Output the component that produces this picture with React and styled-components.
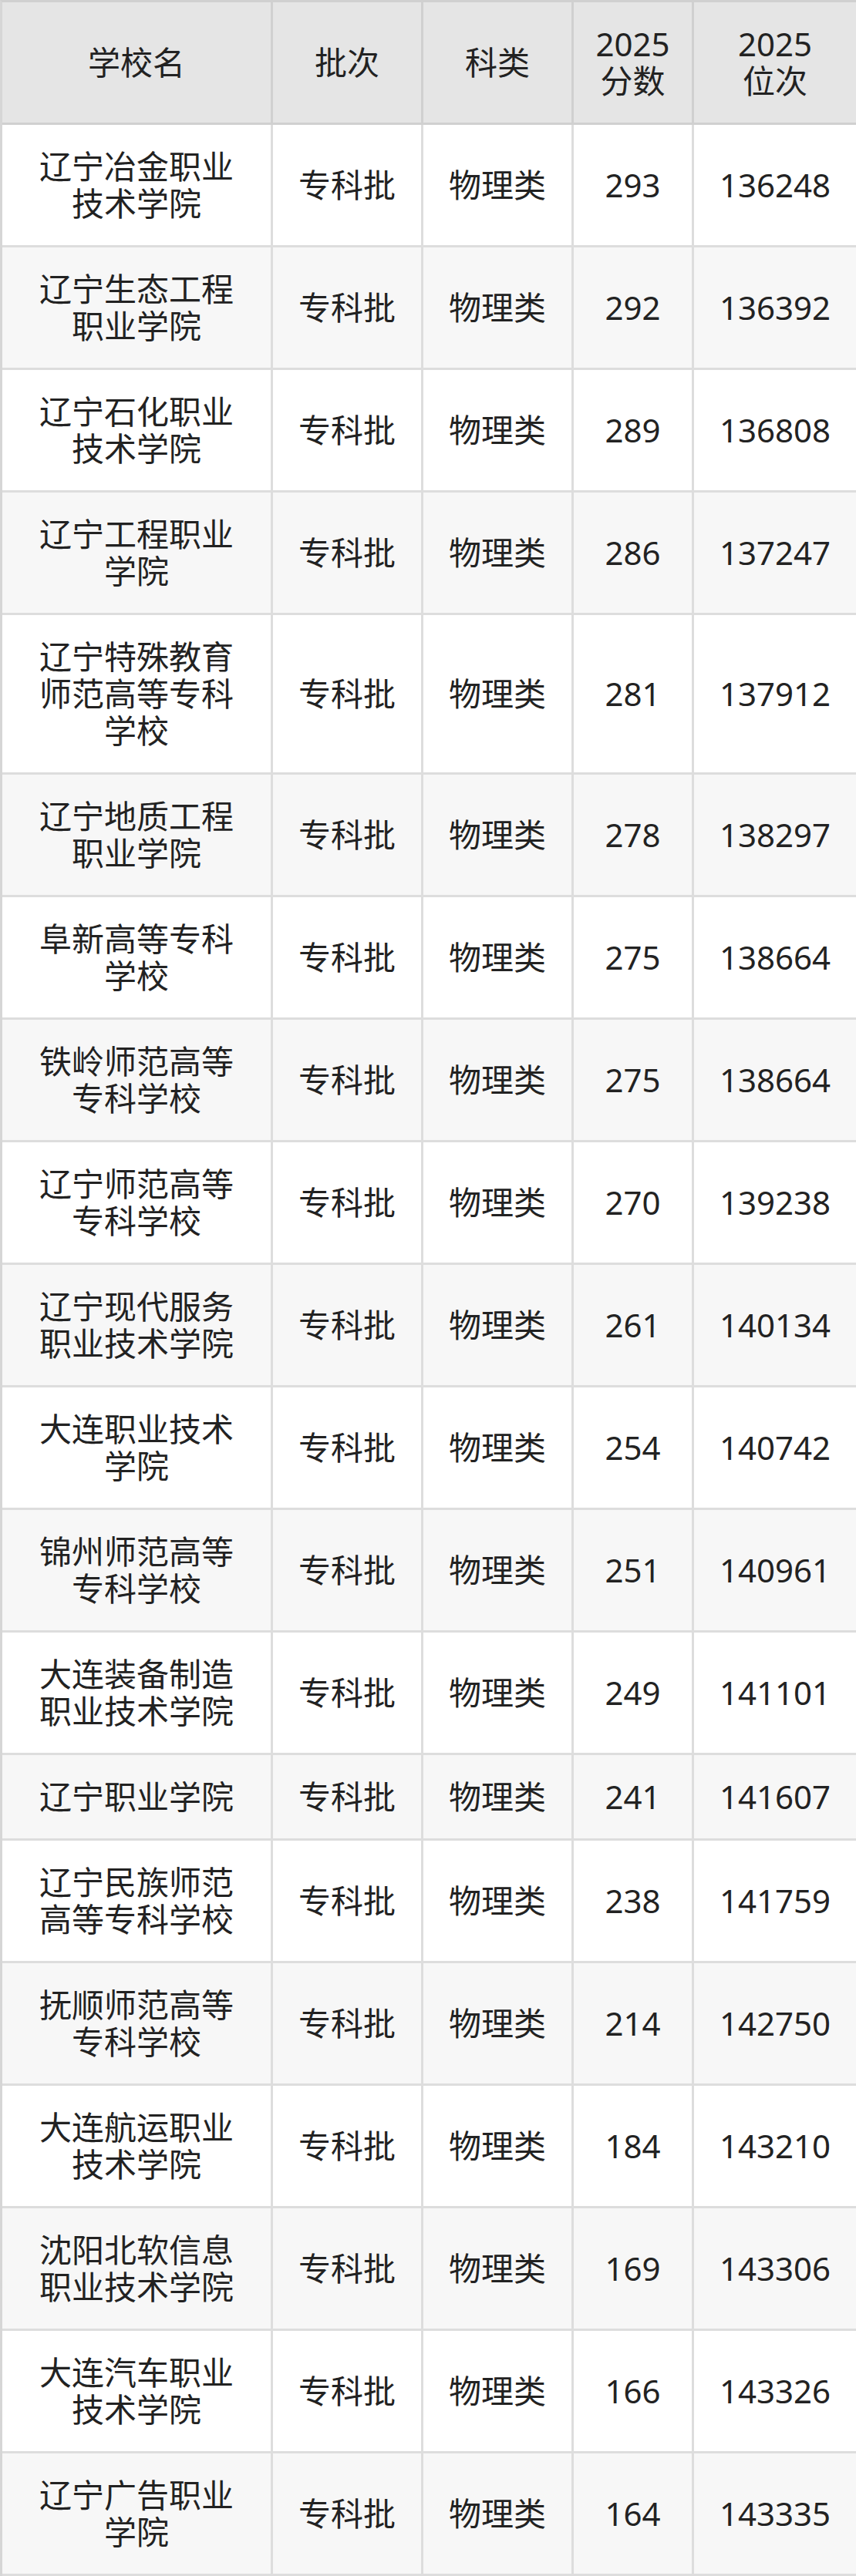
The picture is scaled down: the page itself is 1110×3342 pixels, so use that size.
import React from 'react';
import styled, { createGlobalStyle } from 'styled-components';

const Global = createGlobalStyle`
    html, body {
        margin: 0;
        padding: 0;
        background: #ffffff;
        overflow-x: hidden;
    }
    * {
        box-sizing: border-box;
    }
`;

const Wrapper = styled.div`
    width: 1110px;
    overflow: hidden;
`;

const Table = styled.table`
    width: 1110px;
    table-layout: fixed;
    border-collapse: separate;
    border-spacing: 0;
    border-top: 3px solid #d0d0d0;
    border-left: 3px solid #d6d6d6;
    font-family: "Noto Sans", "Noto Sans CJK SC", sans-serif;
    font-size: 42px;
    line-height: 48px;
    color: #222222;
`;

const HeadCell = styled.th`
    width: ${props => props.$w}px;
    padding: 30px ${props => props.$px}px;
    background: #e5e5e5;
    font-weight: 400;
    text-align: center;
    vertical-align: middle;
    border-right: ${props => (props.$last ? 'none' : '3px solid #d0d0d0')};
    border-bottom: 3px solid #d0d0d0;
`;

const Row = styled.tr`
    background: ${props => (props.$even ? '#f7f7f7' : '#ffffff')};
`;

const Cell = styled.td`
    padding: 30px ${props => props.$px}px;
    text-align: center;
    vertical-align: middle;
    border-right: ${props => (props.$last ? 'none' : '3px solid #dddddd')};
    border-bottom: 3px solid #dddddd;
`;

const columns = [
    { key: 'name', label: ['学校名'], w: 351, px: 30 },
    { key: 'batch', label: ['批次'], w: 195, px: 8 },
    { key: 'type', label: ['科类'], w: 195, px: 8 },
    { key: 'score', label: ['2025', '分数'], w: 156, px: 8 },
    { key: 'rank', label: ['2025', '位次'], w: 210, px: 8 },
];

const schools = [
    ['辽宁冶金职业技术学院', 293, 136248],
    ['辽宁生态工程职业学院', 292, 136392],
    ['辽宁石化职业技术学院', 289, 136808],
    ['辽宁工程职业学院', 286, 137247],
    ['辽宁特殊教育师范高等专科学校', 281, 137912],
    ['辽宁地质工程职业学院', 278, 138297],
    ['阜新高等专科学校', 275, 138664],
    ['铁岭师范高等专科学校', 275, 138664],
    ['辽宁师范高等专科学校', 270, 139238],
    ['辽宁现代服务职业技术学院', 261, 140134],
    ['大连职业技术学院', 254, 140742],
    ['锦州师范高等专科学校', 251, 140961],
    ['大连装备制造职业技术学院', 249, 141101],
    ['辽宁职业学院', 241, 141607],
    ['辽宁民族师范高等专科学校', 238, 141759],
    ['抚顺师范高等专科学校', 214, 142750],
    ['大连航运职业技术学院', 184, 143210],
    ['沈阳北软信息职业技术学院', 169, 143306],
    ['大连汽车职业技术学院', 166, 143326],
    ['辽宁广告职业学院', 164, 143335],
];

const App = () => {
    return (
        <>
            <Global />
            <Wrapper>
                <Table>
                    <thead>
                        <tr>
                            {columns.map((col, i) => (
                                <HeadCell
                                    key={col.key}
                                    $w={col.w}
                                    $px={col.px}
                                    $last={i === columns.length - 1}
                                >
                                    {col.label.map((line, j) => (
                                        <React.Fragment key={j}>
                                            {j > 0 && <br />}
                                            {line}
                                        </React.Fragment>
                                    ))}
                                </HeadCell>
                            ))}
                        </tr>
                    </thead>
                    <tbody>
                        {schools.map(([name, score, rank], i) => {
                            const values = [name, '专科批', '物理类', score, rank];
                            return (
                                <Row key={name} $even={i % 2 === 1}>
                                    {values.map((v, j) => (
                                        <Cell
                                            key={j}
                                            $px={columns[j].px}
                                            $last={j === values.length - 1}
                                        >
                                            {v}
                                        </Cell>
                                    ))}
                                </Row>
                            );
                        })}
                    </tbody>
                </Table>
            </Wrapper>
        </>
    );
};

export default App;
